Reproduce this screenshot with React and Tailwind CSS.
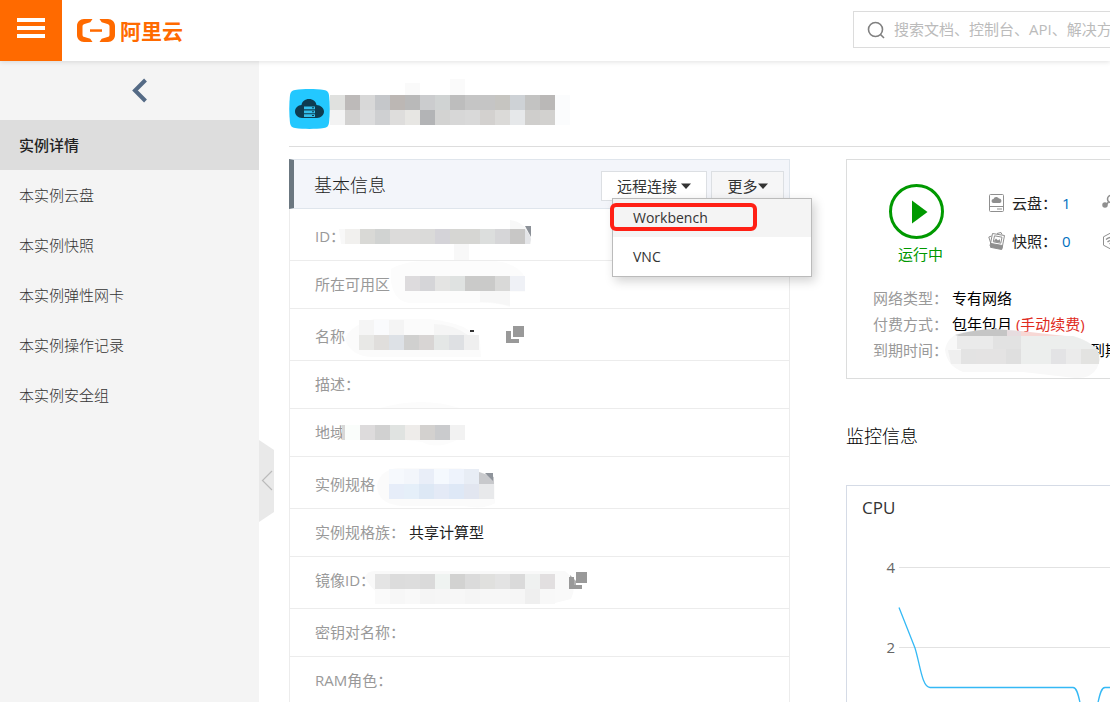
import React, { useState } from 'react';

const CELL = 15;

// Blurred-out value: rows of flat cells on a soft pale smudge
const Mosaic = ({ rows, y = 0, children, className = '' }) => {
  const width = Math.max(...rows.map((r) => r.length)) * CELL;
  return (
    <svg className={`shrink-0 overflow-visible ${className}`} width={width} height={CELL} aria-hidden="true">
      {children}
      {rows.map((row, r) =>
        row.map((color, c) => (
          <rect key={`${r}-${c}`} x={c * CELL} y={y + r * CELL} width={CELL} height={CELL} fill={color} shapeRendering="crispEdges" />
        ))
      )}
    </svg>
  );
};

const CopyIcon = ({ className = '' }) => (
  <svg className={`shrink-0 ${className}`} width="18" height="18" viewBox="0 0 18 18" aria-hidden="true">
    <path d="M0 5h5v8h8v4H0z" fill="#999" />
    <path d="M7 0h11v11H7z" fill="#999" />
  </svg>
);

const Logo = () => (
  <svg width="38" height="23" viewBox="0 0 38 23" fill="#ff6a00" aria-hidden="true">
    <path d="M15.500 0H7C3 0 0 3 0 7v9c0 4 3 7 7 7h8.500l-2.200-3.200-5.800-1.700C6 17.600 5.500 17 5.500 15.500v-8C5.500 6 6 5.400 7.500 4.900l5.800-1.700z" />
    <path d="M22.500 0H31c4 0 7 3 7 7v9c0 4-3 7-7 7h-8.500l2.200-3.200 5.800-1.700c1.500-.5 2-1.100 2-2.600v-8c0-1.500-.5-2.100-2-2.600l-5.800-1.700z" />
    <path d="M13 10.300h12v2.500H13z" />
  </svg>
);

const ServerIcon = () => (
  <svg width="41" height="40" viewBox="0 0 41 40" aria-hidden="true">
    <path d="M6 1C15-.2 26-.2 35 1c3 .5 4.500 2 5 5 1 9 1 19 0 28-.5 3-2 4.500-5 5-9 1.200-20 1.200-29 0-3-.5-4.500-2-5-5C0 25 0 15 1 6c.5-3 2-4.500 5-5z" fill="#23c8ff" />
    <path d="M13 29c-4 0-7-3-7-6.500S9 16 12.500 16c.5-3.500 3.500-6 7.500-6s7 2.500 7.500 6c4 0 7.500 3 7.500 6.500S32 29 28 29z" fill="#0e3c51" />
    <path d="M15 17.500h11v2.700H15zM15 21.500h11v2.700H15zM15 25.300h11V28H15z" fill="#35bfec" />
    <path d="M23 18.300h2v1h-2zM23 22.300h2v1h-2zM23 26.100h2v1h-2z" fill="#0e3c51" />
  </svg>
);

const DiskIcon = () => (
  <svg width="18" height="18" viewBox="0 0 18 18" fill="none" stroke="#8f8f8f" aria-hidden="true">
    <rect x="1.500" y=".5" width="14" height="17" rx="1" />
    <path d="M1.500 12.500h14M9 15h5" />
    <path d="M5.500 9a2 2 0 0 1 0-4 3 3 0 0 1 5.500-.5 2.300 2.300 0 0 1 .8 4.500z" fill="#8f8f8f" stroke="none" />
  </svg>
);

const SnapshotIcon = () => (
  <svg width="18" height="18" viewBox="0 0 18 18" fill="none" stroke="#8f8f8f" aria-hidden="true">
    <path d="M4.500 1.500l12 2-2.500 13-12-2.500z" fill="#fff" />
    <path d="M3.500 4L.8 5l2.500 8M9 1.500l4-1 1 2" />
    <path d="M6.500 3.800l7.500 1.400-1.200 6-7.500-1.400z" />
    <path d="M3 11.500l11.500 2-.8 4-11.200-2.200z" fill="#8f8f8f" />
    <path d="M5.500 9.500l2.500-3 2 2 1.500-1.500 1 3.500z" fill="#8f8f8f" stroke="none" />
  </svg>
);

const LinkIcon = () => (
  <svg width="18" height="18" viewBox="0 0 18 18" fill="none" stroke="#8f8f8f" strokeWidth="1.500" aria-hidden="true">
    <circle cx="9" cy="5" r="3.500" />
    <path d="M6.500 8L4 11" />
    <circle cx="3" cy="11" r="2" fill="#8f8f8f" />
    <circle cx="13" cy="14" r="2" />
  </svg>
);

const NetworkIcon = () => (
  <svg width="18" height="18" viewBox="0 0 18 18" fill="none" stroke="#8f8f8f" aria-hidden="true">
    <path d="M9 .8l7.500 4v8.400L9 17.200l-7.500-4V4.800z" />
    <path d="M4 7.500c3-2.500 7-2.500 10 0M5.500 10c2-1.800 5-1.800 7 0M7.500 12c1-.8 2-.8 3 0" strokeWidth="1.400" />
  </svg>
);

const Caret = () => (
  <svg width="10" height="6" viewBox="0 0 10 6" aria-hidden="true">
    <path d="M0 .5h10L5 6z" fill="#333" />
  </svg>
);

const menuItems = ['实例详情', '本实例云盘', '本实例快照', '本实例弹性网卡', '本实例操作记录', '本实例安全组'];

const TopBar = () => (
  <header className="relative z-20 flex h-[61px] shrink-0 items-center bg-white shadow-[0_1px_5px_rgba(0,0,0,0.12)]">
    <button aria-label="菜单" className="flex h-full w-[62px] shrink-0 flex-col items-center justify-center gap-1 bg-[#ff6a00] pb-[5px]">
      <span className="h-1 w-7 bg-white" />
      <span className="h-1 w-7 bg-white" />
      <span className="h-1 w-7 bg-white" />
    </button>
    <a href="#" className="ml-[15px] flex items-center gap-[5px] text-[21px] leading-6 font-bold text-[#ff6a00]">
      <Logo />
      阿里云
    </a>
    <div className="ml-auto w-[257px] shrink-0 pb-0.5">
      <label className="flex h-[37px] w-[420px] items-center gap-2 border border-[#dcdcdc] px-3">
        <svg width="20" height="20" viewBox="0 0 20 20" fill="none" stroke="#808080" strokeWidth="1.600" aria-hidden="true">
          <circle cx="9.500" cy="9.500" r="7" />
          <path d="M14.500 14.500L18 18" />
        </svg>
        <input
          type="search"
          aria-label="搜索"
          placeholder="搜索文档、控制台、API、解决方案和资源"
          className="min-w-0 flex-1 bg-transparent text-[15px] outline-none placeholder:text-[#bbb]"
        />
      </label>
    </div>
  </header>
);

const Sidebar = ({ active, setActive }) => (
  <aside className="w-[259px] shrink-0 bg-[#f4f4f4]">
    <button aria-label="返回" className="flex h-[59px] w-full items-center justify-center pl-5">
      <svg width="16" height="25" viewBox="0 0 16 25" fill="none" stroke="#546a85" strokeWidth="4" aria-hidden="true">
        <path d="M13.500 2L3 12.500 13.500 23" />
      </svg>
    </button>
    <nav>
      {menuItems.map((item) => (
        <a
          key={item}
          href="#"
          onClick={() => setActive(item)}
          className={`flex h-[50px] items-center pl-[19px] ${item === active ? 'bg-[#ddd] font-medium text-[#222]' : 'font-light text-[#333]'}`}
        >
          {item}
        </a>
      ))}
    </nav>
  </aside>
);

const Row = ({ label, className = 'h-12', children }) => (
  <div className={`flex items-center border-b border-[#ececec] pl-[25px] ${className}`}>
    <dt className="shrink-0 text-[#999]">{label}</dt>
    <dd className="flex items-center text-[#222]">{children}</dd>
  </div>
);

const BasicInfo = () => {
  const [open, setOpen] = useState(true);

  return (
    <section>
      <div className="relative flex h-[50px] items-center border border-l-[5px] border-[#dfe5ec] border-l-[#6b7780] bg-[#f3f5fa] pr-[5px] pl-5">
        <h2 className="pt-0.5 text-lg font-light text-[#222]">基本信息</h2>
        <div className="ml-auto flex gap-1 pt-1">
          <button
            onClick={() => setOpen(!open)}
            className="flex h-[30px] w-[106px] items-center justify-center gap-1 border border-[#dcdfe3] bg-white text-[#333]"
          >
            远程连接
            <Caret />
          </button>
          <button className="flex h-[30px] w-[73px] items-center justify-center border border-[#dcdfe3] bg-[#f6f6f7] text-[#333]">
            更多
            <Caret />
          </button>
        </div>
        {open && (
          <ul className="absolute top-[38px] -right-[23px] z-10 w-[200px] border border-[#bbb] bg-white text-sm text-[#333] shadow-[3px_4px_10px_rgba(0,0,0,0.18)]">
            <li className="relative">
              <a href="#" className="flex h-[38px] items-center bg-[#f4f4f4] pl-5">Workbench</a>
              <span className="pointer-events-none absolute top-1 -left-[3px] h-7 w-[147px] rounded-md border-4 border-[#ff2015]" />
            </li>
            <li>
              <a href="#" className="flex h-[39px] items-center pl-5">VNC</a>
            </li>
          </ul>
        )}
      </div>

      <dl className="border-x border-[#ececec]">
        <Row label="ID：" className="h-[52px] pt-1">
          <Mosaic rows={[['#f1f0ee', '#d9d9d6', '#d1d3d2', '#dcdbda', '#dcdbda', '#dadad9', '#d4d3d8', '#d6d6d3', '#d6d6d3', '#dcdedd', '#d6d6d8', '#c8c7c6']]}>
            <path d="M-6 0H0V15H-4zM109 15h15v16h-15zM165-9c10 1 18 8 21 16v8h-21z" fill="#f8f8f8" />
            <path d="M180-3h6V8z" fill="#8c9198" />
            <path d="M180 0c3 3 5 6 6 10l-1 5h-5z" fill="#e4e5e8" />
          </Mosaic>
        </Row>
        <Row label="所在可用区">
          <Mosaic className="ml-[15px]" y={-1} rows={[['#dddbdd', '#d5d5d8', '#e4e4e3', '#dfe2e1', '#cacac9', '#cacac9', '#d9d9d8', '#eff1f6']]}>
            <path d="M-14-8Q0-16 20-16H90Q112-14 120 0V15H105V30Q88 25 70 26H10Q-10 28-14 5z" fill="#fcfcfc" />
            <path d="M75 14h30v15q-15-4-30-4z" fill="#f7f7f7" />
          </Mosaic>
        </Row>
        <Row label="名称" className="h-[52px] pt-1">
          <Mosaic className="ml-3.5" y={-9} rows={[['#f5f5f5', '#fafbfd', '#f4f4f4']]}>
            <path d="M-14 10Q-8-4 15-10H70Q110-6 121 12L122 28H15Q-8 28-14 10z" fill="#fbfbfb" />
            <path d="M111 1h4v2h-4z" fill="#333" />
          </Mosaic>
          <Mosaic className="-ml-[45px]" y={6} rows={[['#e8e8e6', '#e0dedc', '#dde1e6', '#d0d0cf', '#d8d5d4', '#e4e7e6', '#dee0e3', '#efefef']]}>
            <path d="M75-5q18 0 34 11H75z" fill="#f5f5f5" />
          </Mosaic>
          <CopyIcon className="mb-1 ml-[27px]" />
        </Row>
        <Row label="描述：" />
        <Row label="地域">
          <Mosaic rows={[['#fafdfb', '#dddbdc', '#d1d1d1', '#e0e3e1', '#eeecea', '#d3d1cf', '#cacbcd', '#f2f2f2']]}>
            <path d="M-3 0h3v15h-3z" fill="#d8d8d8" />
            <path d="M35-17q42-12 80 0zM60 15h52q-20 10-35 2z" fill="#fcfcfc" />
          </Mosaic>
        </Row>
        <Row label="实例规格" className="h-[52px] pt-1">
          <Mosaic
            className="ml-3.5"
            y={-8}
            rows={[
              ['#f6f9fd', '#f3f6fb', '#e9eef8', '#f5f9fe', '#eef3fc', '#e8edf5'],
              ['#e6edf9', '#e5eff9', '#dde8f5', '#e4eaf6', '#dee8f6', '#e2e6f0', '#e8e9eb'],
            ]}
          >
            <path d="M-12 8Q-8-9 12-9H70Q106-6 106 10V26Q95 33 75 29H15Q-12 28-12 8z" fill="#fbfbfb" />
            <path d="M90-5l15 5v7H90z" fill="#c8c9cc" />
            <path d="M96-4h8v8z" fill="#8f949b" />
          </Mosaic>
        </Row>
        <Row label="实例规格族：">
          <span className="ml-1">共享计算型</span>
        </Row>
        <Row label="镜像ID：" className="h-[52px] pb-1">
          <Mosaic
            y={1}
            rows={[
              ['#e4e4e4', '#dcdcdc', '#dddddd', '#dadada', '#eff3f1', '#d2d2d1', '#dbdbdb', '#e0e0de', '#e3e3e3', '#dadada', '#eff1f0', '#e2dfe0'],
              ['#fafafa', '#f7f7f7', '#f9f9f9', '#f5f5f5', '#f6f6f6', '#f7f7f7', '#f5f5f5', '#f7f7f7', '#f7f7f7', '#f6f6f6', '#efefef', '#f8f8f8'],
            ]}
          >
            <path d="M-10 4Q-8-2 0-2H190Q204 8 196 26L180 30H30Q0 26-10 4z" fill="#f9f9f9" />
            <path d="M195 2l6 6v8h-6z" fill="#b0b0b0" />
          </Mosaic>
          <CopyIcon className="ml-3.5" />
        </Row>
        <Row label="密钥对名称：" />
        <Row label="RAM角色：" />
      </dl>
    </section>
  );
};

const Stat = ({ icon, label, value }) => (
  <div className="flex items-center">
    {icon}
    <span className="ml-1.5 text-[#222]">{label}</span>
    <a href="#" className="ml-[5px] text-[#0070c0]">{value}</a>
  </div>
);

const StatusCard = () => (
  <section className="relative h-[220px] border border-[#dcdddd] pl-[26px]">
    <div className="flex pt-6">
      <div className="ml-4 flex w-[55px] flex-col items-center text-[#090]">
        <svg width="55" height="55" viewBox="0 0 55 55" aria-hidden="true">
          <circle cx="27.500" cy="27.500" r="26" fill="none" stroke="#090" strokeWidth="3" />
          <path d="M23 16.500v23L38.500 28z" fill="#090" />
        </svg>
        <span className="mt-1 ml-2 whitespace-nowrap">运行中</span>
      </div>
      <div className="ml-11 grid grid-cols-[114px_114px] auto-rows-[38px]">
        <Stat icon={<DiskIcon />} label="云盘：" value="1" />
        <Stat icon={<LinkIcon />} />
        <Stat icon={<SnapshotIcon />} label="快照：" value="0" />
        <Stat icon={<NetworkIcon />} />
      </div>
    </div>
    <dl className="mt-[19px] grid grid-cols-[79px_1fr] leading-[26px] whitespace-nowrap text-black">
      <dt className="text-[#999]">网络类型：</dt>
      <dd>专有网络</dd>
      <dt className="text-[#999]">付费方式：</dt>
      <dd>
        包年包月 <span className="text-[#e02b1d]">(手动续费)</span>
      </dd>
      <dt className="text-[#999]">到期时间：</dt>
      <dd className="pl-[138px]">到期</dd>
    </dl>
    <svg className="absolute top-[168px] left-[96px]" width="158" height="52" aria-hidden="true">
      <path d="M2 22Q4 9 18 4Q65-2 90 6L130 8Q154 14 157 32L154 40Q148 51 132 50L80 44H20Q4 38 2 22z" fill="#f8f8f8" />
      <path d="M12 7Q40-1 64 2V8H16z" fill="#c5c5c5" />
      <path d="M64 2l14 1v5H64z" fill="#e6dcdf" />
      <path d="M78 3l44 5H78z" fill="#f7d8d5" />
      <path d="M14 8h36v13H14z" fill="#eaeaea" />
      <path d="M50 8h28v13H50z" fill="#e2e2e2" />
      <path d="M78 8h52q16 5 24 13H78z" fill="#eceeed" />
      <path d="M5 22h13v14H8z" fill="#efefef" />
      <path d="M18 21h15v15H18z" fill="#e3e3e3" />
      <path d="M33 21h30v15H33z" fill="#e4e3e3" />
      <path d="M63 21h15v15H63z" fill="#dfdfdf" />
      <path d="M78 21h30v15H78z" fill="#eceeed" />
      <path d="M108 21h15v15h-15z" fill="#e3e3e5" />
      <path d="M123 21h15v15h-15z" fill="#ebebeb" />
      <path d="M138 21h16q3 5 2 15h-18z" fill="#e3e3e1" />
    </svg>
  </section>
);

const CpuChart = () => (
  <section className="mt-[35px] h-[400px] border border-[#d5dbe6] px-[15px] pt-2.5">
    <h3 className="text-[17px] leading-6 text-[#333]">CPU</h3>
    <svg className="mt-6 block" width="600" height="200" viewBox="0 0 600 200" fill="none" aria-label="CPU">
      <path d="M37 23.500H600M37 103.500H600" stroke="#e2e2e2" />
      <g fill="#666" fontSize="15" textAnchor="end">
        <text x="33" y="29">4</text>
        <text x="33" y="109">2</text>
      </g>
      <path
        d="M37 63.500L53 104C58 120 60 143.500 68 143.500H211C219 143.500 217 176 227 176S235 143.500 243 143.500H600"
        stroke="#35b9f5"
        strokeWidth="1.300"
      />
    </svg>
  </section>
);

const App = () => {
  const [active, setActive] = useState('实例详情');

  return (
    <div className="flex h-screen flex-col overflow-hidden bg-white font-['Open_Sans','Noto_Sans_CJK_SC',sans-serif] text-[15px]">
      <TopBar />
      <div className="flex min-h-0 flex-1">
        <Sidebar active={active} setActive={setActive} />
        <main className="relative min-w-0 flex-1 overflow-hidden pl-[30px]">
          <button aria-label="收起" className="absolute top-[379px] left-0">
            <svg width="15" height="82" viewBox="0 0 15 82" fill="none" aria-hidden="true">
              <path d="M0 0l15 10v62L0 82z" fill="#e9e9e9" />
              <path d="M13 31L3.500 40.500 13 50" stroke="#bbb" strokeWidth="1.200" />
            </svg>
          </button>

          <div className="flex h-[86px] items-center border-b border-[#ddd] pt-2.5">
            <ServerIcon />
            <Mosaic
              className="mb-3"
              rows={[
                ['#e0e1df', '#bdbab9', '#d8d8d8', '#c5c7ca', '#bcb7b4', '#b9b9b9', '#cbccce', '#d0d3d3', '#bdbdbd', '#c5c5c5', '#c5c5c5', '#c6c5c1', '#ced2d6', '#c3c3c2', '#bab8b7', '#fbfcfd'],
                ['#f3f3f3', '#d2d1d0', '#dcdcdd', '#cfd0d2', '#dedddc', '#e7e6e3', '#b3b4b6', '#d3d3d2', '#d7d7d7', '#d9d9d9', '#d3d1cf', '#dbdad8', '#e6e8ea', '#cfcecc', '#d2d1cf', '#fbfcfd'],
              ]}
            >
              <path d="M75-12h15V0H75zM120-16h15V0h-15z" fill="#fafafa" />
            </Mosaic>
          </div>

          <div className="mt-3 grid grid-cols-[501px_minmax(420px,1fr)] gap-14">
            <BasicInfo />
            <div>
              <StatusCard />
              <h2 className="mt-[43px] text-lg font-light text-black">监控信息</h2>
              <CpuChart />
            </div>
          </div>
        </main>
      </div>
    </div>
  );
};

export default App;
